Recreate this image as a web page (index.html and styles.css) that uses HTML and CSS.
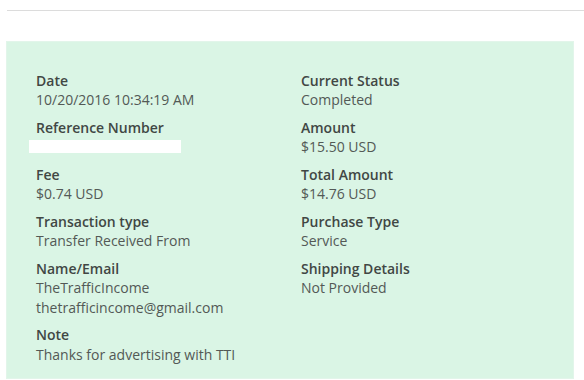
FILE: index.html
```html
<!DOCTYPE html>
<html>
<head>
<meta charset="utf-8">
<link rel="stylesheet" href="styles.css">
</head>
<body>
<div class="rule"></div>
<div class="panel">
  <div class="col">
    <div class="item"><div class="label">Date</div><div class="value">10/20/2016 10:34:19 AM</div></div>
    <div class="item"><div class="label">Reference Number</div><div class="value"><span class="redact"></span></div></div>
    <div class="item"><div class="label">Fee</div><div class="value">$0.74 USD</div></div>
    <div class="item"><div class="label">Transaction type</div><div class="value">Transfer Received From</div></div>
    <div class="item"><div class="label">Name/Email</div><div class="value">TheTrafficIncome</div><div class="value">thetrafficincome@gmail.com</div></div>
    <div class="item"><div class="label">Note</div><div class="value">Thanks for advertising with TTI</div></div>
  </div>
  <div class="col">
    <div class="item"><div class="label">Current Status</div><div class="value">Completed</div></div>
    <div class="item"><div class="label">Amount</div><div class="value">$15.50 USD</div></div>
    <div class="item"><div class="label">Total Amount</div><div class="value">$14.76 USD</div></div>
    <div class="item"><div class="label">Purchase Type</div><div class="value">Service</div></div>
    <div class="item"><div class="label">Shipping Details</div><div class="value">Not Provided</div></div>
  </div>
</div>
</body>
</html>
```
FILE: styles.css
```css
html, body {
  margin: 0;
  padding: 0;
  background: #fff;
}
body {
  font-family: "Open Sans", "DejaVu Sans", sans-serif;
  font-size: 14px;
  line-height: 19.5px;
}
.rule {
  margin: 10px 0 0 7px;
  border-top: 1px solid #dcdcdc;
}
.panel {
  margin: 30px 0 0 6px;
  width: 568px;
  height: 338px;
  box-sizing: border-box;
  background: #daf5e5;
  border: 1px solid #e2f5ea;
  padding: 28.5px 0 0 29px;
  display: grid;
  grid-template-columns: 265px 1fr;
}
.col {
  display: flex;
  flex-direction: column;
  gap: 8px;
}
.label {
  color: #414744;
  font-weight: 600;
}
.value {
  color: #535956;
  height: 19.5px;
}
.redact {
  display: inline-block;
  width: 152px;
  height: 13px;
  background: #fff;
  margin: 3px 0 0 -7px;
  vertical-align: top;
}
```
